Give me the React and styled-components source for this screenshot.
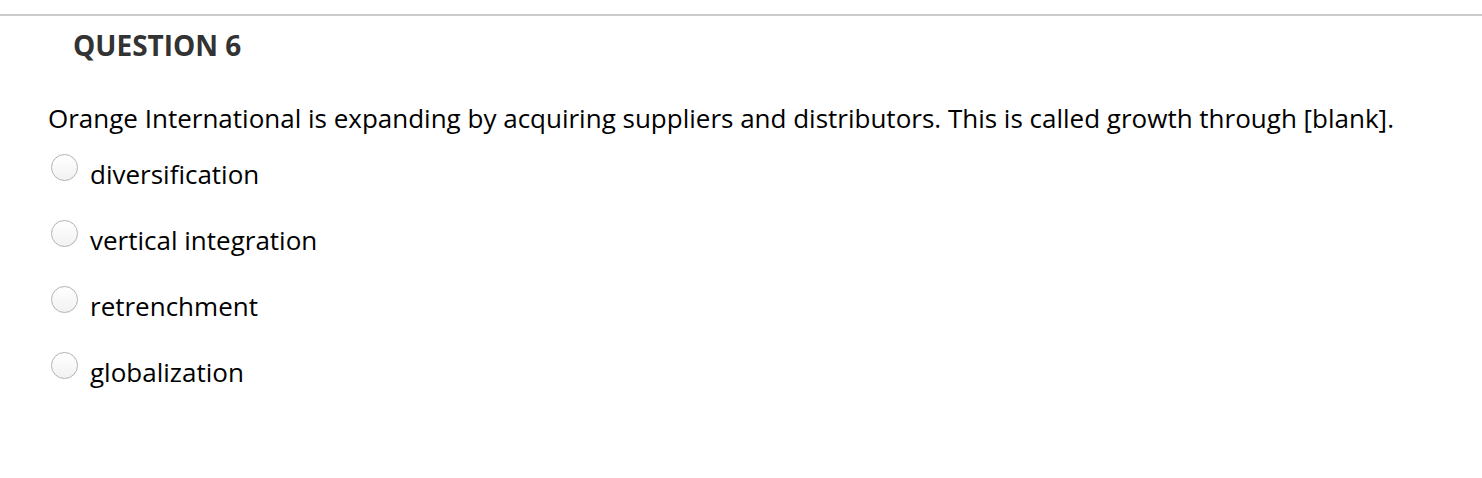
import React, { useState } from "react";
import styled, { createGlobalStyle } from "styled-components";

const GlobalStyle = createGlobalStyle`
  html, body {
    margin: 0;
    padding: 0;
    background: #fff;
  }
  body {
    font-family: "Open Sans", "Liberation Sans", Arial, sans-serif;
  }
`;

const Page = styled.div`
  padding-top: 14px;
  width: 1482px;
  height: 478px;
  box-sizing: border-box;
  overflow: hidden;
`;

const Divider = styled.div`
  height: 2px;
  background: #cbcbcb;
`;

const Title = styled.h2`
  margin: 10px 0 0 73px;
  font-size: 28px;
  line-height: 38px;
  font-weight: 700;
  color: #333;
`;

const QuestionText = styled.p`
  margin: 36px 0 0 48px;
  font-size: 26px;
  line-height: 36px;
  color: #000;
`;

const Options = styled.div`
  display: flex;
  flex-direction: column;
  gap: 30px;
  margin: 20px 0 0 52px;
`;

const Option = styled.label`
  display: flex;
  align-items: flex-start;
  gap: 12px;
  font-size: 26px;
  line-height: 36px;
  color: #000;
  cursor: pointer;
`;

const Radio = styled.span`
  flex: none;
  box-sizing: border-box;
  width: 27px;
  height: 27px;
  margin-top: -2px;
  margin-left: -1px;
  border-radius: 50%;
  border: 1px solid #b4b4b4;
  background: linear-gradient(#fff, #f2f2f2);
  box-shadow: inset 0 1px 1px rgba(255, 255, 255, 0.9), 0 0 1px rgba(0, 0, 0, 0.08);
  display: flex;
  align-items: center;
  justify-content: center;

  &::after {
    content: "";
    width: 10px;
    height: 10px;
    border-radius: 50%;
    background: #333;
    display: ${(props) => (props.checked ? "block" : "none")};
  }
`;

const choices = [
  "diversification",
  "vertical integration",
  "retrenchment",
  "globalization",
];

const App = () => {
  const [selected, setSelected] = useState(null);

  return (
    <Page>
      <GlobalStyle />
      <Divider />
      <Title>QUESTION 6</Title>
      <QuestionText>
        Orange International is expanding by acquiring suppliers and
        distributors. This is called growth through [blank].
      </QuestionText>
      <Options>
        {choices.map((choice) => (
          <Option key={choice} onClick={() => setSelected(choice)}>
            <Radio checked={selected === choice} />
            {choice}
          </Option>
        ))}
      </Options>
    </Page>
  );
};

export default App;
